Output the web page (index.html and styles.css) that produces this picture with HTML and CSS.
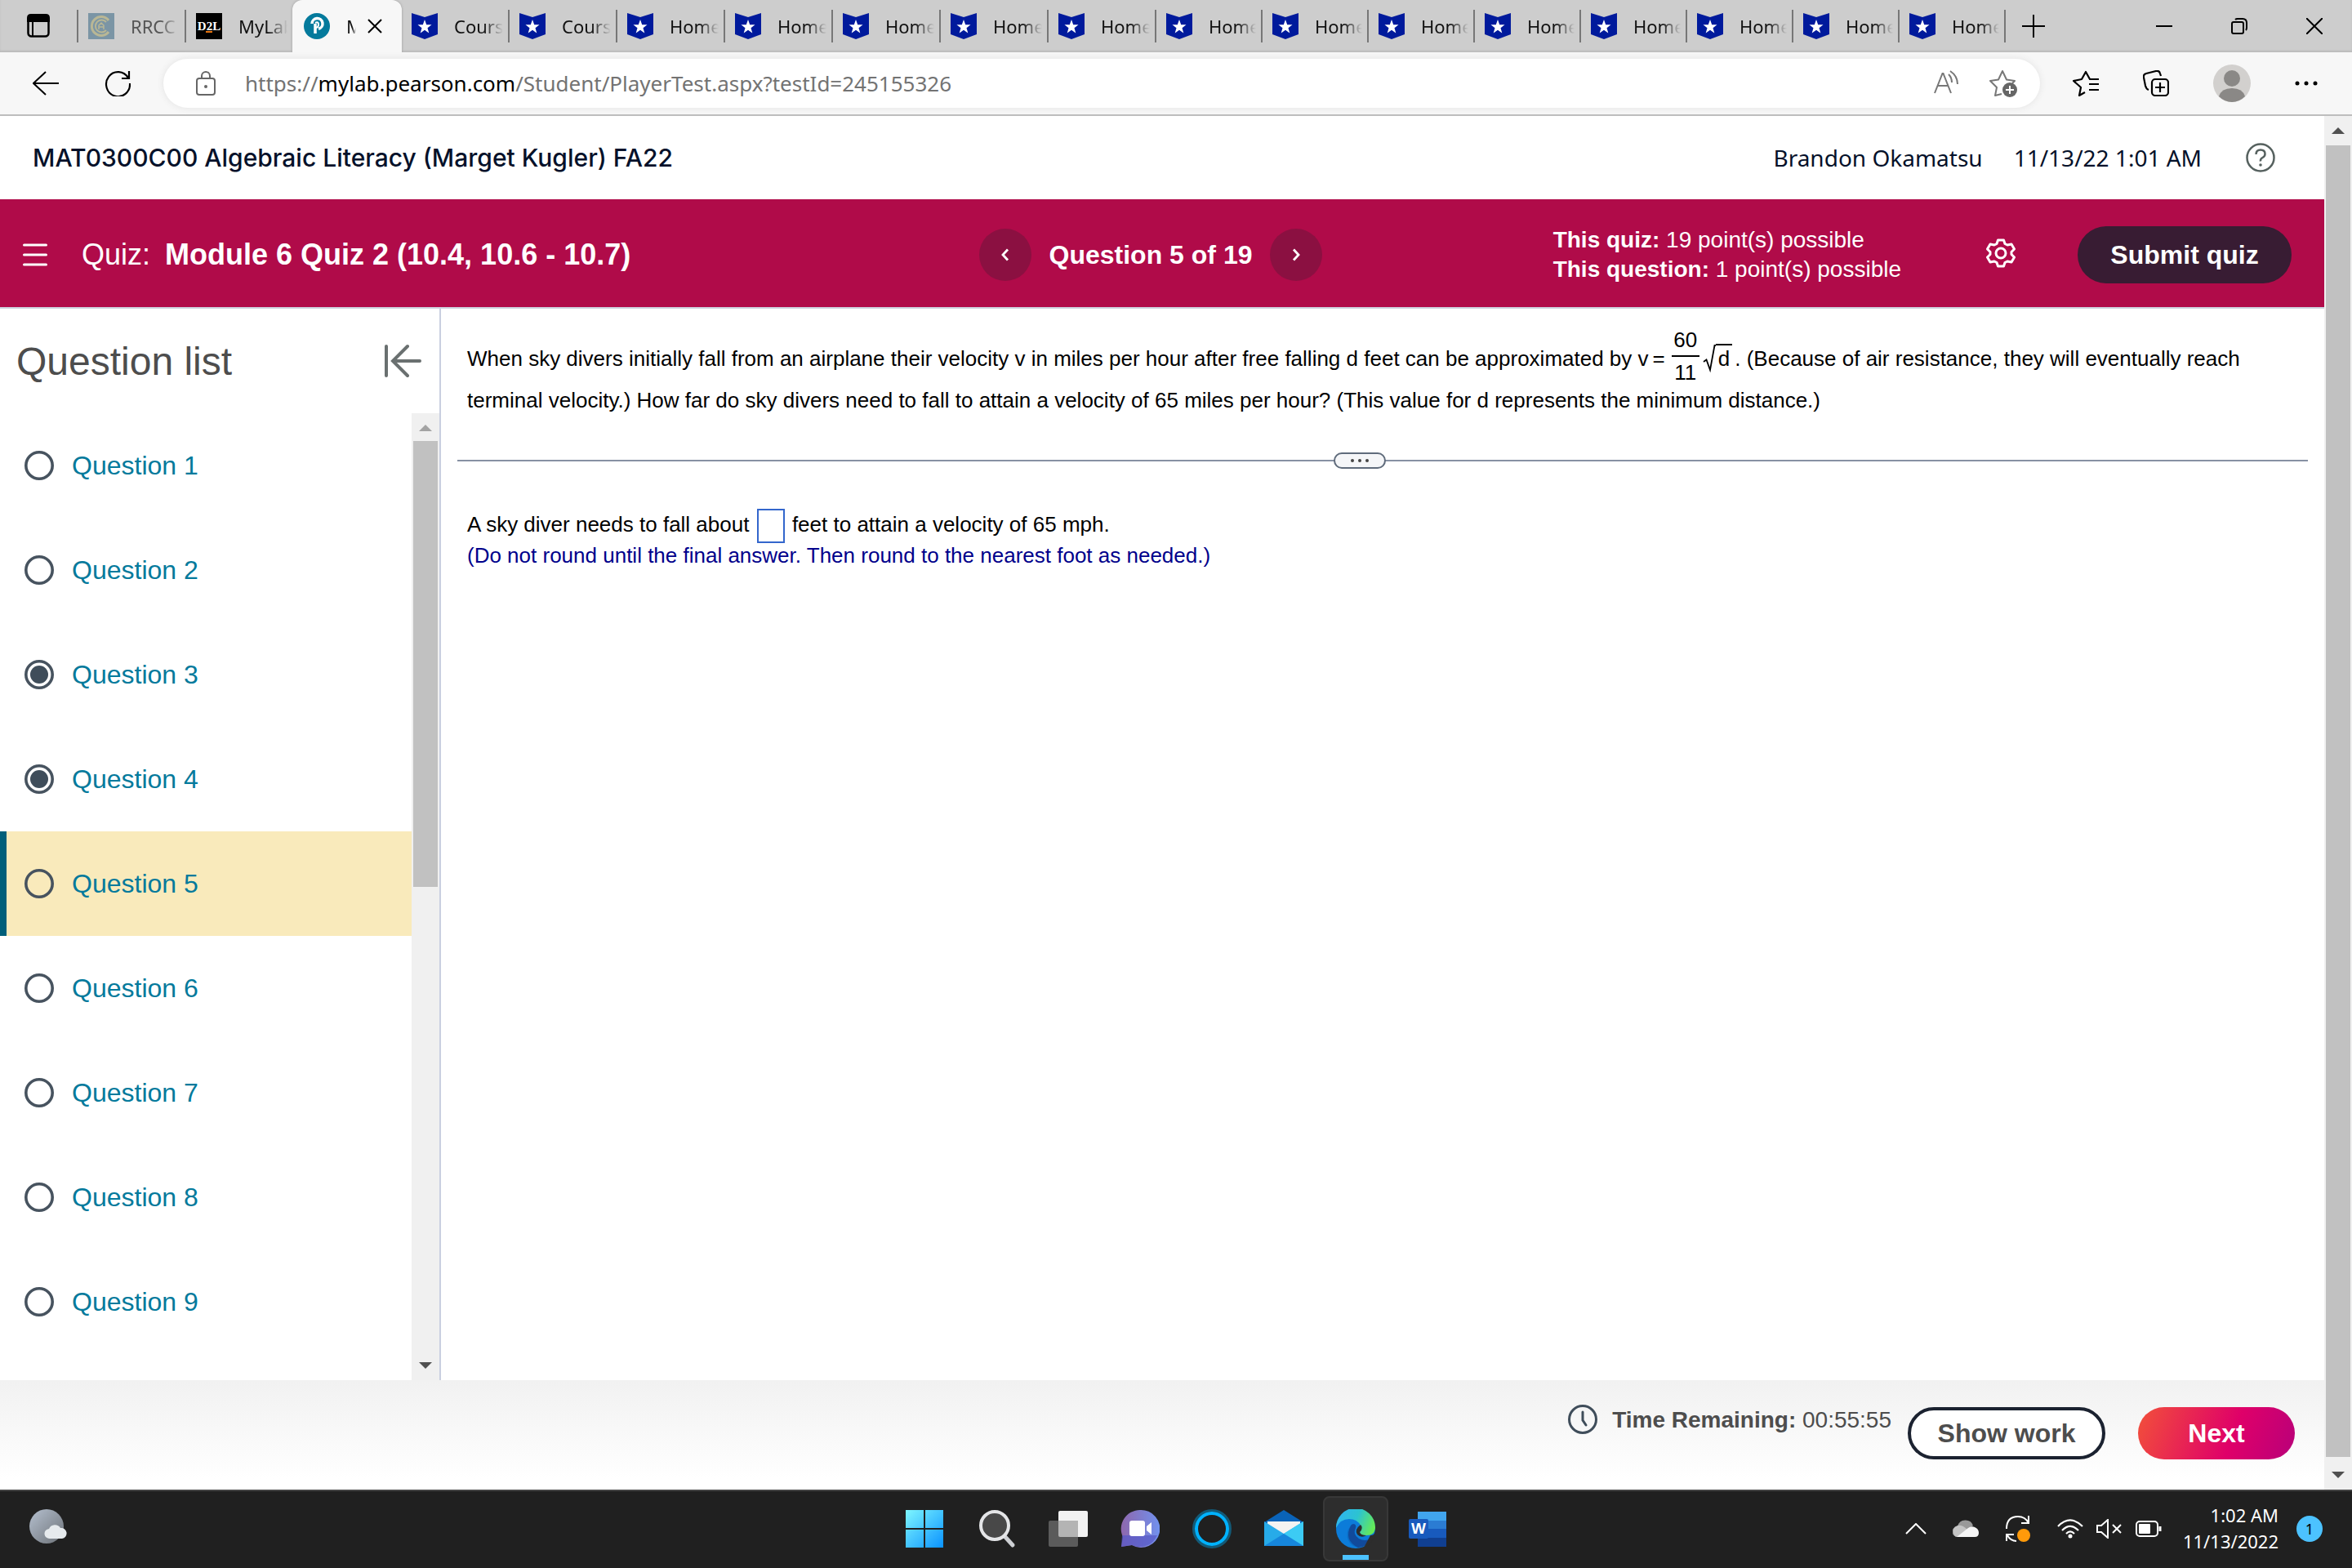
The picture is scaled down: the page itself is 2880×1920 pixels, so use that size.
FILE: index.html
```html
<!DOCTYPE html>
<html lang="en">
<head>
    <meta charset="UTF-8">
    <meta name="viewport" content="width=device-width, initial-scale=1.0">
    <title>MyLab Quiz</title>
    <link rel="stylesheet" href="styles.css">
</head>
<body>
    <!-- Shared icon shapes -->
    <svg class="sprite" aria-hidden="true">
        <symbol id="badge-star" viewBox="0 0 32 32">
            <path d="M0 0l16 5L32 0v26l-16 6-16-6z" fill="#001a9c"/>
            <path d="M16 8l2.200 6.200h6.300l-5 4 1.800 6.300-5.300-3.700-5.300 3.700 1.800-6.300-5-4h6.300z" fill="#fff"/>
        </symbol>
        <symbol id="ring" viewBox="0 0 36 36">
            <circle cx="18" cy="18" r="16.200" fill="none" stroke="#47535f" stroke-width="3.600"/>
        </symbol>
        <symbol id="ring-full" viewBox="0 0 36 36">
            <circle cx="18" cy="18" r="16.200" fill="none" stroke="#47535f" stroke-width="3.600"/>
            <circle cx="18" cy="18" r="11" fill="#3f4d5a"/>
        </symbol>
    </svg>

    <div class="tab-strip">
        <button class="tab-actions" aria-label="Tab actions">
            <svg width="28" height="30" viewBox="0 0 28 30"><rect x="1.500" y="2.500" width="25" height="25" rx="4" fill="none" stroke="#000" stroke-width="2.500"/><path d="M1 9V5q0-4 4-4h18q4 0 4 4v4zM7 8v19" stroke="#000" stroke-width="2"/></svg>
        </button>
        <div class="tab visited">
            <svg class="favicon" viewBox="0 0 32 32"><rect width="32" height="32" fill="#7b95a5"/><g fill="none" stroke="#b9b795"><path d="M25 9A11.500 11.500 0 1 0 25 23" stroke-width="3"/><path d="M22 11a7.500 7.500 0 1 0 0 10" stroke-width="2"/><path d="M13 20v-5l3-3 3 3v5M13 17h6" stroke-width="1.500"/></g></svg>
            <span class="tab-title">RRCC</span>
        </div>
        <div class="tab before-active">
            <svg class="favicon" viewBox="0 0 32 32"><rect width="32" height="32" fill="#000"/><text x="16" y="21" text-anchor="middle" class="d2l">D2L</text><path d="M12 23h8" stroke="#e87511" stroke-width="2"/></svg>
            <span class="tab-title">MyLab</span>
        </div>
        <div class="tab active">
            <svg class="favicon" viewBox="0 0 32 32"><circle cx="16" cy="16" r="16" fill="#047a9c"/><path d="M10 13a6.500 6.500 0 1 1 8 6.300M14 13v12" fill="none" stroke="#fff" stroke-width="3.500"/><path d="M14 12q4-2 4 2t-4 4" fill="none" stroke="#fff" stroke-width="2"/></svg>
            <span class="tab-title">MyLab</span>
            <button class="tab-close" aria-label="Close tab"><svg width="18" height="18" viewBox="0 0 18 18"><path d="M1 1l16 16M17 1L1 17" stroke="#000" stroke-width="2"/></svg></button>
        </div>
        <div class="tab"><svg class="favicon"><use href="#badge-star"/></svg><span class="tab-title">Cours</span></div>
        <div class="tab"><svg class="favicon"><use href="#badge-star"/></svg><span class="tab-title">Cours</span></div>
        <div class="tab"><svg class="favicon"><use href="#badge-star"/></svg><span class="tab-title">Home</span></div>
        <div class="tab"><svg class="favicon"><use href="#badge-star"/></svg><span class="tab-title">Home</span></div>
        <div class="tab"><svg class="favicon"><use href="#badge-star"/></svg><span class="tab-title">Home</span></div>
        <div class="tab"><svg class="favicon"><use href="#badge-star"/></svg><span class="tab-title">Home</span></div>
        <div class="tab"><svg class="favicon"><use href="#badge-star"/></svg><span class="tab-title">Home</span></div>
        <div class="tab narrow"><svg class="favicon"><use href="#badge-star"/></svg><span class="tab-title">Home</span></div>
        <div class="tab narrow"><svg class="favicon"><use href="#badge-star"/></svg><span class="tab-title">Home</span></div>
        <div class="tab narrow"><svg class="favicon"><use href="#badge-star"/></svg><span class="tab-title">Home</span></div>
        <div class="tab narrow"><svg class="favicon"><use href="#badge-star"/></svg><span class="tab-title">Home</span></div>
        <div class="tab narrow"><svg class="favicon"><use href="#badge-star"/></svg><span class="tab-title">Home</span></div>
        <div class="tab narrow"><svg class="favicon"><use href="#badge-star"/></svg><span class="tab-title">Home</span></div>
        <div class="tab narrow"><svg class="favicon"><use href="#badge-star"/></svg><span class="tab-title">Home</span></div>
        <div class="tab narrow"><svg class="favicon"><use href="#badge-star"/></svg><span class="tab-title">Home</span></div>
        <button class="new-tab" aria-label="New tab"><svg width="28" height="28" viewBox="0 0 28 28"><path d="M14 0v28M0 14h28" stroke="#000" stroke-width="2"/></svg></button>
        <div class="window-controls">
            <button aria-label="Minimize"><svg width="20" height="20" viewBox="0 0 20 20"><path d="M0 10h20" stroke="#000" stroke-width="2"/></svg></button>
            <button aria-label="Restore"><svg width="20" height="20" viewBox="0 0 20 20"><g fill="none" stroke="#000" stroke-width="2"><rect x="1" y="5" width="14" height="14" rx="2"/><path d="M5 2q1-1 3-1h6q5 0 5 5v6q0 2-1 3"/></g></svg></button>
            <button aria-label="Close"><svg width="20" height="20" viewBox="0 0 20 20"><path d="M0 0l20 20M20 0L0 20" stroke="#000" stroke-width="2"/></svg></button>
        </div>
    </div>

    <div class="toolbar">
        <button aria-label="Back"><svg width="32" height="32" viewBox="0 0 32 32"><path d="M16 2L1 16l15 14M1 16h31" fill="none" stroke="#000" stroke-width="2"/></svg></button>
        <button aria-label="Refresh"><svg width="32" height="32" viewBox="0 0 32 32"><path d="M29 9.500A14.500 15 0 1 0 31 16M30 1v9h-9" fill="none" stroke="#000" stroke-width="2.200"/></svg></button>
        <div class="address-bar">
            <svg class="lock" width="24" height="30" viewBox="0 0 24 30"><g fill="none" stroke="#666" stroke-width="2"><rect x="1" y="9" width="22" height="20" rx="3"/><path d="M7 9V6a5 5 0 0 1 10 0v3"/></g><circle cx="12" cy="19" r="2" fill="#666"/></svg>
            <div class="url" role="textbox" aria-label="Address">https://<b>mylab.pearson.com</b>/Student/PlayerTest.aspx?testId=245155326</div>
            <button aria-label="Read aloud"><svg width="32" height="32" viewBox="0 0 32 32"><path d="M1 28L10.500 4h1L21 28M5 19h12M18 5q4 4 4 10M20 1q9 6 9 16" fill="none" stroke="#777" stroke-width="2"/></svg></button>
            <button aria-label="Add to favorites"><svg width="34" height="34" viewBox="0 0 34 34"><path d="M15 30l-8 2 2-10-8-8 10-1.500L16 2l5 10.500L31 14l-3 3" fill="none" stroke="#777" stroke-width="2" stroke-linejoin="round"/><circle cx="25" cy="25" r="9" fill="#666"/><path d="M25 20v10M20 25h10" stroke="#fff" stroke-width="2"/></svg></button>
        </div>
        <div class="toolbar-icons">
            <button aria-label="Favorites"><svg width="32" height="32" viewBox="0 0 32 32"><path d="M15 27l-7 4 2-10-9-8 10-2 5-9 5 9h11M20 17h12M20 24h12" fill="none" stroke="#000" stroke-width="2.200" stroke-linejoin="round"/></svg></button>
            <button aria-label="Collections"><svg width="32" height="32" viewBox="0 0 32 32"><g fill="none" stroke="#000" stroke-width="2.200"><rect x="11" y="11" width="20" height="20" rx="4"/><path d="M7 24q-3-1-4-5L1 9q-1-4 3-5l12-3q4-1 5 3l1 3M21 15v12M15 21h12"/></g></svg></button>
            <button aria-label="Profile"><svg width="46" height="46" viewBox="0 0 46 46"><circle cx="23" cy="23" r="23" fill="#d2d0ce"/><circle cx="23" cy="17" r="10" fill="#8a8886"/><path d="M7 39q3-10 16-10t16 10q-7 7-16 7T7 39z" fill="#8a8886"/></svg></button>
            <button aria-label="Settings and more"><svg width="28" height="6" viewBox="0 0 28 6"><circle cx="3" cy="3" r="2.500"/><circle cx="14" cy="3" r="2.500"/><circle cx="25" cy="3" r="2.500"/></svg></button>
        </div>
    </div>

    <div class="viewport">
        <div class="page">
            <header class="course-bar">
                <h1>MAT0300C00 Algebraic Literacy (Marget Kugler) FA22</h1>
                <span class="user">Brandon Okamatsu</span>
                <span class="date">11/13/22 1:01 AM</span>
                <button class="help" aria-label="Help"><svg width="36" height="36" viewBox="0 0 36 36"><circle cx="18" cy="18" r="16.500" fill="none" stroke="#56615f" stroke-width="2.500"/><path d="M12.500 14q0-5.500 5.500-5.500t5.500 5q0 3-3 4.500t-2.500 4.500" fill="none" stroke="#56615f" stroke-width="2.500"/><circle cx="18" cy="27" r="1.800" fill="#56615f"/></svg></button>
            </header>

            <div class="quiz-bar">
                <div class="quiz-name">
                    <button aria-label="Menu"><svg width="30" height="28" viewBox="0 0 30 28"><path d="M1.500 2h27M1.500 14h27M1.500 26h27" stroke="#fff" stroke-width="3" stroke-linecap="round"/></svg></button>
                    <h2>Quiz: <b>Module 6 Quiz 2 (10.4, 10.6 - 10.7)</b></h2>
                </div>
                <div class="pager">
                    <button aria-label="Previous question"><svg width="10" height="16" viewBox="0 0 10 16"><path d="M8 1.500L2 8l6 6.500" fill="none" stroke="#fff" stroke-width="2.800"/></svg></button>
                    <span>Question 5 of 19</span>
                    <button aria-label="Next question"><svg width="10" height="16" viewBox="0 0 10 16"><path d="M2 1.500L8 8l-6 6.500" fill="none" stroke="#fff" stroke-width="2.800"/></svg></button>
                </div>
                <div class="quiz-info">
                    <div class="points">
                        <div><b>This quiz:</b> 19 point(s) possible</div>
                        <div><b>This question:</b> 1 point(s) possible</div>
                    </div>
                    <button class="settings" aria-label="Settings"><svg width="36" height="36" viewBox="0 0 36 36"><path d="M14.500 2h7l1.500 4.500 3 1.500 5-1 3.500 6-3.500 3.500v3l3.500 3.500-3.500 6-5-1-3 1.500-1.500 4.500h-7L13 29.500 10 28l-5 1-3.500-6L5 19.500v-3L1.500 13 5 7l5 1 3-1.500z" fill="none" stroke="#fff" stroke-width="3" stroke-linejoin="round"/><circle cx="18" cy="18" r="6" fill="none" stroke="#fff" stroke-width="3"/></svg></button>
                    <button class="submit">Submit quiz</button>
                </div>
            </div>

            <div class="content">
                <aside class="sidebar">
                    <div class="sidebar-head">
                        <h3>Question list</h3>
                        <button aria-label="Collapse list"><svg width="46" height="42" viewBox="0 0 46 42"><path d="M3 3v36M44 21H12M29 3L11 21l18 18" fill="none" stroke="#6a7070" stroke-width="4" stroke-linecap="round"/></svg></button>
                    </div>
                    <div class="list-wrap">
                        <ul class="questions">
                            <li><a href="#"><svg><use href="#ring"/></svg>Question 1</a></li>
                            <li><a href="#"><svg><use href="#ring"/></svg>Question 2</a></li>
                            <li><a href="#"><svg><use href="#ring-full"/></svg>Question 3</a></li>
                            <li><a href="#"><svg><use href="#ring-full"/></svg>Question 4</a></li>
                            <li class="current"><a href="#"><svg><use href="#ring"/></svg>Question 5</a></li>
                            <li><a href="#"><svg><use href="#ring"/></svg>Question 6</a></li>
                            <li><a href="#"><svg><use href="#ring"/></svg>Question 7</a></li>
                            <li><a href="#"><svg><use href="#ring"/></svg>Question 8</a></li>
                            <li><a href="#"><svg><use href="#ring"/></svg>Question 9</a></li>
                        </ul>
                        <div class="scrollbar list-scroll">
                            <span class="arrow up muted"></span>
                            <div class="track"><div class="thumb"></div></div>
                            <span class="arrow down"></span>
                        </div>
                    </div>
                </aside>

                <main class="question">
                    <p>When sky divers initially fall from an airplane their velocity v in miles per hour after free falling d feet can be approximated by v<span class="equals">=</span><span class="fraction"><span>60</span><span>11</span></span><svg class="radical" width="16" height="34" viewBox="0 0 16 34"><path d="M1 21l3.500-2.500L9 31l5.500-30H16" fill="none" stroke="#000" stroke-width="1.800"/></svg><span class="radicand">d</span>. (Because of air resistance, they will eventually reach terminal velocity.) How far do sky divers need to fall to attain a velocity of 65 miles per hour? (This value for d represents the minimum distance.)</p>
                    <div class="divider">
                        <button aria-label="Resize panes"><svg width="24" height="6" viewBox="0 0 24 6"><g fill="#444"><circle cx="3" cy="3" r="2"/><circle cx="12" cy="3" r="2"/><circle cx="21" cy="3" r="2"/></g></svg></button>
                    </div>
                    <p class="answer"><label for="feet">A sky diver needs to fall about</label> <input type="text" id="feet"> feet to attain a velocity of 65 mph.<br>
                    <span class="hint">(Do not round until the final answer. Then round to the nearest foot as needed.)</span></p>
                </main>
            </div>

            <footer class="actions">
                <svg class="clock" width="36" height="36" viewBox="0 0 36 36"><circle cx="18" cy="18" r="16.500" fill="none" stroke="#3f4d5a" stroke-width="3"/><path d="M18 9v10l4 6" fill="none" stroke="#3f4d5a" stroke-width="3" stroke-linecap="round"/></svg>
                <div class="timer"><b>Time Remaining:</b> 00:55:55</div>
                <button class="show-work">Show work</button>
                <button class="next">Next</button>
            </footer>
        </div>
        <div class="scrollbar page-scroll">
            <span class="arrow up"></span>
            <div class="track"><div class="thumb"></div></div>
            <span class="arrow down"></span>
        </div>
    </div>

    <div class="taskbar">
        <div class="task-left">
            <svg width="46" height="44" viewBox="0 0 46 44"><defs><linearGradient id="moon" x1="0" y1="0" x2="1" y2="1"><stop offset="0" stop-color="#b5c0cf"/><stop offset="1" stop-color="#6d7278"/></linearGradient></defs><circle cx="21" cy="21" r="21" fill="url(#moon)"/><path d="M25 36a6 6 0 0 1-1-12 8 8 0 0 1 14-1 6.500 6.500 0 0 1 2 13z" fill="#e6eaed"/></svg>
        </div>
        <div class="task-apps">
            <button aria-label="Start"><svg width="48" height="48" viewBox="0 0 48 48"><defs><linearGradient id="win" x1="0" y1="0" x2="1" y2="1"><stop offset="0" stop-color="#7ef6ff"/><stop offset="1" stop-color="#0a93ff"/></linearGradient></defs><path d="M1 1h22v22H1zM25 1h22v22H25zM1 25h22v22H1zM25 25h22v22H25z" fill="url(#win)"/></svg></button>
            <button aria-label="Search"><svg width="48" height="48" viewBox="0 0 48 48"><path d="M34 33l10 11" stroke="#ced0d4" stroke-width="5" stroke-linecap="round"/><circle cx="22" cy="20" r="17" fill="#484848" stroke="#e4e5e7" stroke-width="4"/></svg></button>
            <button aria-label="Task view"><svg width="48" height="48" viewBox="0 0 48 48"><rect x="12" y="2" width="36" height="32" rx="2" fill="#f2f2f2"/><rect x="0" y="14" width="36" height="32" rx="2" fill="#5b5b5b"/><path d="M12 14h24v20H14q-2 0-2-2z" fill="#b4b4b4"/></svg></button>
            <button aria-label="Chat"><svg width="48" height="48" viewBox="0 0 48 48"><defs><linearGradient id="chat" x1="0" y1="0.300" x2="1" y2="0.300"><stop offset="0" stop-color="#8e67ad"/><stop offset="1" stop-color="#7191ee"/></linearGradient></defs><path d="M24 1a23 23 0 1 1-10 43L1 46l2-12A23 23 0 0 1 24 1z" fill="url(#chat)"/><path d="M2 32h43a23 23 0 0 1-31 12L1 46z" fill="#5558c8" opacity=".7"/><rect x="11" y="14" width="19" height="19" rx="3" fill="#fff"/><path d="M32 21l6-5v15l-6-5z" fill="#fff"/></svg></button>
            <button aria-label="Cortana"><svg width="48" height="48" viewBox="0 0 48 48"><circle cx="24" cy="24" r="22.500" fill="none" stroke="#135a77" stroke-width="3"/><circle cx="24" cy="24" r="19" fill="none" stroke="#00b2ff" stroke-width="4"/></svg></button>
            <button aria-label="Mail"><svg width="48" height="48" viewBox="0 0 48 48"><path d="M0 16L24 1l24 15v6H0z" fill="#0a63b8"/><path d="M4 15h40v16H4z" fill="#f4f3f2"/><path d="M0 15l24 15 24-15v30H0z" fill="#27abe9"/><path d="M24 30l24-15v30z" fill="#3ccbf4"/><path d="M0 45l24-15 24 15z" fill="#1686dc"/></svg></button>
            <button class="running" aria-label="Edge"><svg width="48" height="48" viewBox="0 0 48 48"><defs><linearGradient id="edge-top" x1="0" y1="0.300" x2="1" y2="0.600"><stop offset="0" stop-color="#2fb5f0"/><stop offset=".5" stop-color="#2cc3d1"/><stop offset="1" stop-color="#66eb55"/></linearGradient></defs><circle cx="24" cy="24" r="24" fill="#0c7cd9"/><path d="M0 23A24 24 0 0 1 48 22q0 10-11 10-8 0-8-4 3-3 1-8-4-8-14-8Q5 12 0 23z" fill="url(#edge-top)"/><path d="M18 20q-7 9-3 18 4 8 12 9Q13 38 18 20z" fill="#0b6cc4"/><path d="M18 20q-9 18 9 27 10 0 17-11-9 4-16 0-8-5-4-13 1-4-2-5-3 0-4 2z" fill="#114a9b"/><path d="M44 36q2-2 1 1-3 7-11 10l8-15q6 1 6-8v-2l4 2q1 9-8 12z" fill="#2d2d2d"/><path d="M30 19q4 4-1 9 1 4 8 4-6 4-11-1-4-6 4-12z" fill="#2d2d2d"/></svg></button>
            <button aria-label="Word"><svg width="48" height="48" viewBox="0 0 48 48"><path d="M12 3h35v11H12z" fill="#41a5ee"/><path d="M12 14h35v10H12z" fill="#2b7cd3"/><path d="M12 24h35v11H12z" fill="#185abd"/><path d="M12 35h35v11H12z" fill="#103f91"/><rect x="1" y="12" width="24" height="24" rx="2" fill="#185abd"/><text x="13" y="30" text-anchor="middle" class="word-mark">W</text></svg></button>
        </div>
        <div class="tray">
            <button aria-label="Show hidden icons"><svg width="26" height="14" viewBox="0 0 26 14"><path d="M1 13L13 1l12 12" fill="none" stroke="#fff" stroke-width="2"/></svg></button>
            <svg width="32" height="22" viewBox="0 0 32 22"><path d="M6 21a6 6 0 0 1 0-13 10 10 0 0 1 19-1z" fill="#999"/><path d="M2 19Q-2 10 6 7q6-1 12 5l-12 9q-3 0-4-2z" fill="#c4c4c4"/><path d="M5 21l14-11q4-3 8-1 5 2 5 7t-5 5z" fill="#f5f5f5"/></svg>
            <svg class="sync" width="32" height="32" viewBox="0 0 32 32"><path d="M2 16Q2 1 16 1q9 0 13 8M29 0v9h-9M2 31v-8h9M3 24q4 7 11 7" fill="none" stroke="#fff" stroke-width="2"/><circle cx="23" cy="24" r="8" fill="#ff9a0a"/></svg>
            <div class="tray-group">
                <svg width="32" height="24" viewBox="0 0 32 24"><g fill="none" stroke="#fff" stroke-width="2.200"><path d="M1 9q15-15 30 0M6 14q10-10 20 0M11 18q5-5 10 0"/></g><circle cx="16" cy="21" r="2.500" fill="#fff"/></svg>
                <svg width="32" height="24" viewBox="0 0 32 24"><path d="M1 8h5l8-7v22l-8-7H1zM20 7l10 10M30 7L20 17" fill="none" stroke="#fff" stroke-width="2"/></svg>
                <svg width="32" height="20" viewBox="0 0 32 20"><rect x="1" y="1" width="26" height="18" rx="4" fill="none" stroke="#fff" stroke-width="2"/><rect x="4" y="4" width="14" height="12" rx="1" fill="#fff"/><path d="M30 7v6" stroke="#fff" stroke-width="3"/></svg>
            </div>
            <div class="clock-text">1:02 AM<br>11/13/2022</div>
            <span class="notify">1</span>
        </div>
    </div>
</body>
</html>
```
FILE: styles.css
```css
* {
    box-sizing: border-box;
}

body {
    margin: 0;
    height: 100vh;
    display: flex;
    flex-direction: column;
    overflow: hidden;
    background-color: #fff;
    font-family: "Liberation Sans", Arial, sans-serif;
}

h1, h2, h3, p, ul {
    margin: 0;
    padding: 0;
}

button {
    display: flex;
    align-items: center;
    justify-content: center;
    padding: 0;
    border: none;
    background: none;
    font-family: inherit;
    cursor: pointer;
}

svg {
    flex-shrink: 0;
}

.sprite {
    position: absolute;
    width: 0;
    height: 0;
}

/* Tabs */
.tab-strip {
    display: flex;
    align-items: center;
    height: 64px;
    background-color: #cdcdcd;
    box-shadow: inset 0 -2px 2px #bbb;
    font-family: "Noto Sans", sans-serif;
    font-size: 22px;
}

.tab-actions {
    width: 96px;
    height: 40px;
    border-right: 2px solid #777;
}

.tab {
    display: flex;
    align-items: center;
    width: 132px;
    height: 40px;
    padding: 0 6px 0 12px;
    border-right: 2px solid #777;
}

.tab.narrow {
    width: 130px;
}

.favicon {
    width: 32px;
    height: 32px;
    margin-right: 20px;
}

.tab-title {
    flex: 1;
    min-width: 0;
    overflow: hidden;
    white-space: nowrap;
    color: #111;
    -webkit-mask-image: linear-gradient(90deg, #000 60%, transparent);
    mask-image: linear-gradient(90deg, #000 60%, transparent);
}

.tab.visited .tab-title {
    color: #555;
}

.tab.before-active {
    width: 130px;
    border-right: none;
}

.tab.active {
    height: 64px;
    width: 134px;
    padding: 0 24px 0 14px;
    border: none;
    border-radius: 12px 12px 0 0;
    background-color: #f7f7f7;
    box-shadow: 0 0 3px #999;
    clip-path: inset(0 -4px 0 -4px);
}

.tab-close {
    margin-left: 14px;
}

.d2l {
    font: bold 15px "Liberation Serif", serif;
    fill: #fff;
}

.new-tab {
    width: 68px;
}

.window-controls {
    display: flex;
    margin-left: auto;
}

.window-controls button {
    width: 92px;
    height: 64px;
}

/* Toolbar */
.toolbar {
    display: flex;
    align-items: center;
    gap: 56px;
    height: 78px;
    padding: 0 42px 0 40px;
    background-color: #f7f7f7;
    border-bottom: 2px solid #bdbdbd;
}

.address-bar {
    display: flex;
    align-items: center;
    flex: 1;
    gap: 36px;
    height: 60px;
    margin-left: -16px;
    padding: 0 28px 0 40px;
    border-radius: 30px;
    background-color: #fff;
    box-shadow: 0 0 8px #e2e2e2;
}

.url {
    flex: 1;
    color: #737373;
    font-family: "Noto Sans", sans-serif;
    font-size: 26px;
}

.url b {
    color: #000;
    font-weight: normal;
}

.toolbar-icons {
    display: flex;
    align-items: center;
    gap: 54px;
    margin-left: -16px;
}

/* Page */
.viewport {
    display: flex;
    flex: 1;
    min-height: 0;
}

.page {
    display: flex;
    flex: 1;
    flex-direction: column;
    min-width: 0;
}

.course-bar {
    display: flex;
    align-items: center;
    height: 102px;
    padding: 0 60px 0 40px;
    color: #05112a;
    font-family: "Noto Sans", sans-serif;
    font-size: 28px;
}

.course-bar h1 {
    flex: 1;
    font-family: Inter, sans-serif;
    font-size: 30px;
    font-weight: 500;
}

.date {
    margin: 0 54px 0 38px;
}

.quiz-bar {
    display: grid;
    grid-template-columns: 1fr auto 1fr;
    align-items: center;
    height: 134px;
    padding: 4px 40px 0 28px;
    border-bottom: 2px solid #ced3de;
    background-color: #b00b49;
    color: #fff;
}

.quiz-name {
    display: flex;
    align-items: center;
    gap: 42px;
}

.quiz-name h2 {
    font-size: 36px;
    font-weight: normal;
}

.quiz-name b {
    margin-left: 8px;
}

.pager {
    display: flex;
    align-items: center;
    gap: 22px;
    margin-right: 16px;
    font-size: 32px;
    font-weight: bold;
}

.pager button {
    width: 64px;
    height: 64px;
    border-radius: 50%;
    background-color: #8b1041;
}

.quiz-info {
    display: flex;
    align-items: center;
    justify-content: flex-end;
}

.points {
    font-size: 28px;
    line-height: 36px;
}

.settings {
    margin: 0 76px 4px 104px;
}

.submit {
    width: 262px;
    height: 70px;
    border-radius: 36px;
    background-color: #381c33;
    color: #fff;
    font-size: 32px;
    font-weight: bold;
}

.content {
    display: flex;
    flex: 1;
    min-height: 0;
}

/* Sidebar */
.sidebar {
    display: flex;
    flex-direction: column;
    width: 540px;
    border-right: 2px solid #c9cfe0;
}

.sidebar-head {
    display: flex;
    align-items: center;
    justify-content: space-between;
    height: 128px;
    padding: 0 22px 0 20px;
}

.sidebar-head h3 {
    color: #4d4d4d;
    font-size: 48px;
    font-weight: normal;
}

.list-wrap {
    display: flex;
    flex: 1;
    min-height: 0;
}

.questions {
    flex: 1;
    list-style: none;
    overflow: hidden;
}

.questions a {
    display: flex;
    align-items: center;
    gap: 22px;
    height: 128px;
    padding-left: 22px;
    border-left: 8px solid transparent;
    color: #047a9c;
    font-size: 32px;
    text-decoration: none;
}

.questions svg {
    width: 36px;
    height: 36px;
}

.questions .current a {
    border-left-color: #005f7a;
    background-color: #f9eabb;
}

/* Scrollbars */
.scrollbar {
    display: flex;
    flex-direction: column;
    align-items: center;
    width: 34px;
    background-color: #f0f0f0;
}

.arrow {
    width: 16px;
    height: 8px;
    margin: 14px 0;
    background-color: #505050;
}

.arrow.up {
    clip-path: polygon(50% 0, 100% 100%, 0 100%);
}

.arrow.down {
    clip-path: polygon(0 0, 100% 0, 50% 100%);
}

.arrow.muted {
    background-color: #a3a3a3;
}

.track {
    flex: 1;
    width: 30px;
}

.thumb {
    height: 49%;
    background-color: #c1c1c1;
}

.list-scroll .up {
    margin-bottom: 12px;
}

.page-scroll .thumb {
    height: 100%;
}

.page-scroll .down {
    margin-top: 18px;
}

/* Question */
.question {
    flex: 1;
    min-width: 0;
    padding: 23px 20px 0;
}

.question p {
    padding: 0 80px 0 12px;
    font-size: 26px;
    line-height: 38px;
}

.equals {
    margin: 0 8px 0 5px;
}

.fraction {
    display: inline-flex;
    flex-direction: column;
    width: 34px;
    margin-right: 4px;
    line-height: 30px;
    text-align: center;
    vertical-align: 23px;
}

.fraction span:first-child {
    padding-bottom: 4px;
    border-bottom: 2px solid #000;
}

.fraction span:last-child {
    padding-top: 4px;
}

.radical {
    vertical-align: -8px;
}

.radicand {
    display: inline-block;
    margin-right: 3px;
    padding: 0 3px;
    border-top: 2px solid #000;
    line-height: 32px;
}

.divider {
    display: flex;
    align-items: center;
    justify-content: center;
    height: 18px;
    margin: 46px 0 50px;
    padding-right: 56px;
    background: linear-gradient(#8791a3, #8791a3) center / 100% 2px no-repeat;
}

.divider button {
    width: 64px;
    height: 20px;
    border: 2px solid #5f6b7b;
    border-radius: 10px;
    background-color: #f5f6f8;
}

.answer input {
    width: 34px;
    height: 42px;
    margin: -4px 2px;
    padding: 0 4px;
    border: 2px solid #3366cc;
    background-color: #fff;
    font-size: 26px;
    vertical-align: middle;
}

.hint {
    color: #00008b;
}

/* Footer */
.actions {
    display: flex;
    align-items: center;
    justify-content: flex-end;
    height: 134px;
    padding: 0 36px 4px 0;
    background: linear-gradient(#f1f1f1, #fff 90%);
    color: #4d4d4d;
}

.clock {
    margin: 0 18px 34px 0;
}

.timer {
    margin-bottom: 32px;
    font-size: 28px;
}

.actions button {
    height: 64px;
    border-radius: 32px;
    font-size: 32px;
    font-weight: bold;
}

.show-work {
    width: 242px;
    margin: 0 40px 0 20px;
    border: 4px solid #1b2230;
    background-color: #fff;
    color: #4d4d4d;
}

.next {
    width: 192px;
    background: linear-gradient(110deg, #f2503a, #df0069 60%, #b8007a);
    color: #fff;
}

/* Taskbar */
.taskbar {
    display: grid;
    grid-template-columns: 1fr auto 1fr;
    align-items: center;
    height: 96px;
    padding: 0 36px 2px;
    border-top: 2px solid #444;
    background-color: #202020;
    color: #fff;
    font-family: "Noto Sans", sans-serif;
}

.task-apps {
    display: flex;
    gap: 8px;
}

.task-apps button {
    width: 80px;
    height: 80px;
}

.task-apps .running {
    border: 2px solid #383838;
    border-radius: 8px;
    background: linear-gradient(#4cc2ff, #4cc2ff) center bottom / 32px 6px no-repeat #2d2d2d;
}

.word-mark {
    font: bold 19px "Liberation Sans", sans-serif;
    fill: #fff;
}

.tray {
    display: flex;
    align-items: center;
    justify-content: flex-end;
    gap: 32px;
}

.tray-group {
    display: flex;
    align-items: center;
    gap: 16px;
}

.clock-text {
    margin: 0 -2px 2px -6px;
    font-size: 22px;
    line-height: 32px;
    text-align: right;
}

.notify {
    width: 32px;
    height: 32px;
    margin-left: -8px;
    border-radius: 50%;
    background-color: #4cc2ff;
    color: #000;
    font-size: 18px;
    line-height: 32px;
    text-align: center;
}
```
